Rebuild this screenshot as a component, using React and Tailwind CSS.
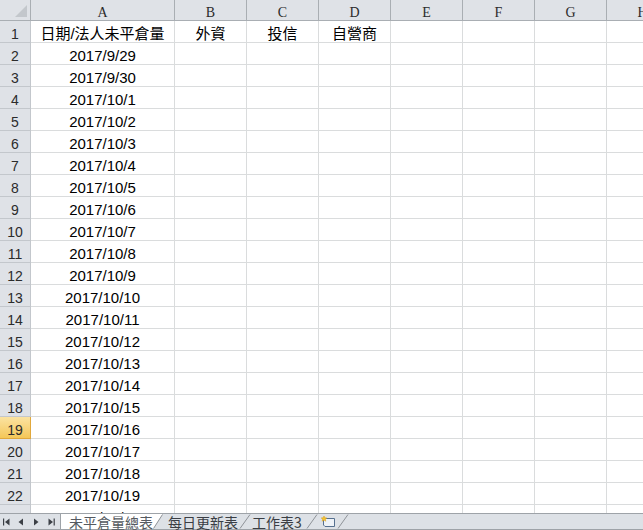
import React from 'react';

const cols = ['A', 'B', 'C', 'D', 'E', 'F', 'G', 'H'];
const dates = [
    '2017/9/29',
    '2017/9/30',
    ...Array.from({ length: 20 }, (_, i) => `2017/10/${i + 1}`),
];
const headRow = ['日期/法人未平倉量', '外資', '投信', '自營商', '', '', '', ''];

const cellFont = "font-['Liberation_Sans','Noto_Sans_CJK_TC',sans-serif]";

// slanted divider between sheet tabs
const Slash = () => (
    <svg width="12" height="15" viewBox="0 0 12 15" className="shrink-0">
        <path d="M1 14.5 L11 0.5" stroke="#8e9398" strokeWidth="1" fill="none" />
    </svg>
);

const ActiveEnd = () => (
    <svg width="10" height="15" viewBox="0 0 10 15" className="shrink-0">
        <path d="M0 0 L9.5 0 L0 15 Z" fill="#ffffff" />
        <path d="M0.5 14.5 L9.5 0.5" stroke="#8e9398" strokeWidth="1" fill="none" />
    </svg>
);

const NavButtons = () => (
    <div className="w-[60px] shrink-0 flex items-center pl-[3px] text-[#3c4046]">
        <svg width="7" height="8" viewBox="0 0 7 8">
            <rect x="0" y="0.5" width="1.2" height="7" fill="currentColor" />
            <path d="M6.5 0.5 L2 4 L6.5 7.5 Z" fill="currentColor" />
        </svg>
        <svg width="6" height="8" viewBox="0 0 6 8" className="ml-[8px]">
            <path d="M5 0.5 L0.5 4 L5 7.5 Z" fill="currentColor" />
        </svg>
        <svg width="6" height="8" viewBox="0 0 6 8" className="ml-[9px]">
            <path d="M1 0.5 L5.5 4 L1 7.5 Z" fill="currentColor" />
        </svg>
        <svg width="7" height="8" viewBox="0 0 7 8" className="ml-[9px]">
            <path d="M0.5 0.5 L5 4 L0.5 7.5 Z" fill="currentColor" />
            <rect x="5.6" y="0.5" width="1.2" height="7" fill="currentColor" />
        </svg>
    </div>
);

const NewSheetIcon = () => (
    <svg width="16" height="13" viewBox="0 0 16 13" className="shrink-0">
        <path d="M3.5 3.5 H14.5 V11.5 H5 L3.5 10 Z" fill="#eef2f7" stroke="#56708f" strokeWidth="1" />
        <path d="M4 1 L4.8 2.8 L6.8 3 L5.3 4.2 L5.8 6.2 L4 5.1 L2.2 6.2 L2.7 4.2 L1.2 3 L3.2 2.8 Z" fill="#f4c430" stroke="#d99a10" strokeWidth="0.5" />
    </svg>
);

const headCell = "h-[21px] pt-[4px] bg-[#dfe2e7] border-r border-b border-[#a9aeb3] flex items-center justify-center text-[14px] text-[#2b2b2b] font-['Liberation_Serif',serif]";
const rowHead = "h-[22px] pt-[5px] bg-[#dfe2e7] border-r border-b border-[#c3c7cc] flex items-center justify-center text-[14px] text-[#2b2b2b] font-['Liberation_Sans',sans-serif]";
const rowHeadSel = "h-[22px] pt-[5px] bg-gradient-to-b from-[#fbe3a0] to-[#f4c757] border-r border-b border-[#e1a83c] flex items-center justify-center text-[14px] text-[#2b2b2b] font-['Liberation_Sans',sans-serif]";

export default function App() {
    return (
        <div className="w-[643px] h-[530px] flex flex-col bg-white overflow-hidden">
            <div className="flex-1 overflow-hidden">
                <div className="grid grid-cols-[31px_144px_repeat(7,72px)] w-max">
                    {/* corner */}
                    <div className="h-[21px] bg-[#dfe2e7] border-r border-b border-[#a9aeb3] relative">
                        <svg width="14" height="14" viewBox="0 0 14 14" className="absolute right-[2px] bottom-[2px]">
                            <path d="M13 1 L13 13 L1 13 Z" fill="#c3c7cc" />
                        </svg>
                    </div>
                    {cols.map((c) => (
                        <div key={c} className={headCell}>
                            {c}
                        </div>
                    ))}

                    {/* row 1 */}
                    <div className={rowHead}>1</div>
                    {headRow.map((t, i) => (
                        <div
                            key={i}
                            className={`h-[22px] pt-[5px] border-r border-b border-[#dadcdd] flex items-center justify-center text-[15px] text-black whitespace-nowrap ${cellFont}`}
                        >
                            {t}
                        </div>
                    ))}

                    {dates.map((d, r) => {
                        const n = r + 2;
                        return (
                            <React.Fragment key={d}>
                                <div className={n === 19 ? rowHeadSel : rowHead}>{n}</div>
                                <div className={`h-[22px] pt-[5px] border-r border-b border-[#dadcdd] flex items-center justify-center text-[15px] text-black ${cellFont}`}>
                                    {d}
                                </div>
                                {cols.slice(1).map((c) => (
                                    <div key={c} className="h-[22px] border-r border-b border-[#dadcdd]" />
                                ))}
                            </React.Fragment>
                        );
                    })}
                </div>
            </div>

            {/* sheet tabs */}
            <div className="h-[17px] shrink-0 flex items-stretch bg-[#dde1e6] border-t border-b border-[#9ea3a8] text-[14px] font-['Noto_Sans_CJK_TC',sans-serif] leading-none">
                <NavButtons />
                <div className="flex items-center bg-white pl-[8px] text-[#555a60] border-l border-[#9ea3a8]">
                    未平倉量總表
                </div>
                <ActiveEnd />
                <div className="flex items-center pl-[5px] pr-[1px] text-[#3a3e44]">每日更新表</div>
                <Slash />
                <div className="flex items-center pl-[1px] pr-[4px] text-[#3a3e44]">工作表3</div>
                <Slash />
                <div className="flex items-center pl-[2px] pr-[1px]">
                    <NewSheetIcon />
                </div>
                <Slash />
            </div>
        </div>
    );
}
